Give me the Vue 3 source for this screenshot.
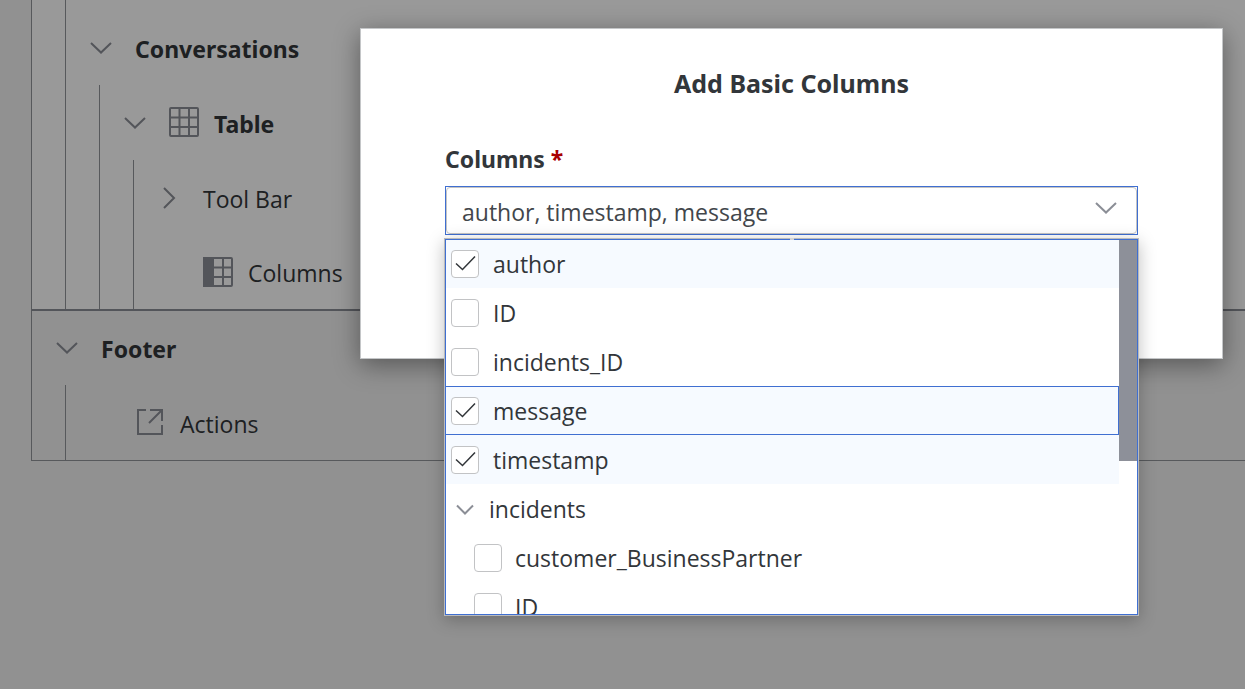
<script setup>
import { ref, computed } from 'vue'

const options = ref([
  { id: 'author', label: 'author', checked: true },
  { id: 'own-id', label: 'ID', checked: false },
  { id: 'incidents-id', label: 'incidents_ID', checked: false },
  { id: 'message', label: 'message', checked: true, focused: true },
  { id: 'timestamp', label: 'timestamp', checked: true },
])
const nested = ref([
  { id: 'customer', label: 'customer_BusinessPartner', checked: false },
  { id: 'nested-id', label: 'ID', checked: false },
])
const order = ['author', 'timestamp', 'message']
const selection = computed(() =>
  [...options.value, ...nested.value]
    .filter((o) => o.checked)
    .sort((a, b) => order.indexOf(a.id) - order.indexOf(b.id))
    .map((o) => o.label)
    .join(', ')
)
</script>

<template>
  <div class="page">
    <main class="outline">
      <section class="panel body-panel">
        <ul class="branch">
          <li>
            <div class="node strong">
              <button class="toggle" type="button" aria-label="Collapse Conversations">
                <svg viewBox="0 0 22 22"><path d="M1 6L11 15.500L21 6" /></svg>
              </button>
              <span>Conversations</span>
            </div>
            <ul class="branch">
              <li>
                <div class="node strong">
                  <button class="toggle" type="button" aria-label="Collapse Table">
                    <svg viewBox="0 0 22 22"><path d="M1 6L11 15.500L21 6" /></svg>
                  </button>
                  <svg class="icon" viewBox="0 0 30 30">
                    <rect x="1" y="1" width="28" height="28" rx="1" />
                    <path d="M10.500 1V29M20 1V29M1 10.500H29M1 20H29" />
                  </svg>
                  <span>Table</span>
                </div>
                <ul class="branch">
                  <li class="node">
                    <button class="toggle" type="button" aria-label="Expand Tool Bar">
                      <svg viewBox="0 0 22 22"><path d="M6 1L16 11L6 21" /></svg>
                    </button>
                    <span>Tool Bar</span>
                  </li>
                  <li class="node last">
                    <span class="toggle"></span>
                    <svg class="icon" viewBox="0 0 30 30">
                      <rect x="1" y="1" width="28" height="28" rx="1" />
                      <path class="solid" d="M1 1H10V29H1Z" />
                      <path d="M20 1V29M11 10.500H29M11 20H29" />
                    </svg>
                    <span>Columns</span>
                  </li>
                </ul>
              </li>
            </ul>
          </li>
        </ul>
      </section>
      <section class="panel footer-panel">
        <div class="node strong last">
          <button class="toggle" type="button" aria-label="Collapse Footer">
            <svg viewBox="0 0 22 22"><path d="M1 6L11 15.500L21 6" /></svg>
          </button>
          <span>Footer</span>
        </div>
        <ul class="branch">
          <li class="node">
            <span class="toggle"></span>
            <svg class="icon" viewBox="0 0 30 30">
              <path d="M11 3H3V27H27V18M15 3H27V14M27 3L14 16" />
            </svg>
            <span>Actions</span>
          </li>
        </ul>
      </section>
    </main>

    <div class="overlay">
      <div class="dialog" role="dialog" aria-labelledby="dialog-title">
        <h1 id="dialog-title">Add Basic Columns</h1>
        <label class="field-label" for="columns">Columns <span class="required">*</span></label>
        <div class="combo">
          <div class="control">
            <input id="columns" type="text" readonly :value="selection" />
            <button class="toggle arrow" type="button" aria-label="Close column list">
              <svg viewBox="0 0 22 22"><path d="M1 5L11 14.500L21 5" /></svg>
            </button>
          </div>
          <div class="dropdown">
            <div class="list">
              <div class="rows">
                <label
                  v-for="o in options"
                  :key="o.id"
                  class="option"
                  :class="{ selected: o.checked, focused: o.focused }"
                >
                  <span class="tick">
                    <input v-model="o.checked" type="checkbox" />
                    <svg v-if="o.checked" viewBox="0 0 28 28"><path d="M5 13.500L11.500 19.500L24 6.500" /></svg>
                  </span>
                  <span>{{ o.label }}</span>
                </label>
                <button class="option group" type="button" aria-expanded="true">
                  <svg viewBox="0 0 18 18"><path d="M1 5.500L9 13.500L17 5.500" /></svg>
                  <span>incidents</span>
                </button>
                <label v-for="o in nested" :key="o.id" class="option child">
                  <span class="tick">
                    <input v-model="o.checked" type="checkbox" />
                    <svg v-if="o.checked" viewBox="0 0 28 28"><path d="M5 13.500L11.500 19.500L24 6.500" /></svg>
                  </span>
                  <span>{{ o.label }}</span>
                </label>
              </div>
              <div class="scrollbar"><div class="thumb"></div></div>
            </div>
          </div>
        </div>
      </div>
    </div>
  </div>
</template>

<style>
body {
  margin: 0;
  background: #f2f2f2;
}
</style>

<style scoped>
.page {
  position: relative;
  min-height: 100vh;
  box-sizing: border-box;
  overflow: hidden;
  font-family: "Open Sans", "Noto Sans", sans-serif;
  font-size: 23px;
  line-height: 32px;
  color: #32363a;
}
.outline {
  padding-left: 31px;
}
.panel {
  border-left: 1px solid #919499;
}
.body-panel {
  background: #fff;
  border-bottom: 2px solid #8b8e96;
}
.body-panel > .branch {
  padding-top: 10px;
}
.footer-panel {
  border-bottom: 1px solid #919499;
}
ul {
  list-style: none;
  margin: 0;
  padding: 0;
}
.branch {
  margin-left: 33px;
  border-left: 1px solid #919499;
}
.node {
  display: flex;
  align-items: center;
  height: 75px;
  padding: 2px 0 0 24px;
  box-sizing: border-box;
}
.node.last {
  height: 74px;
}
.strong,
.field-label,
h1 {
  font-family: "Noto Sans", "Open Sans", sans-serif;
  font-weight: 700;
}
button {
  margin: 0;
  padding: 0;
  border: 0;
  background: none;
  font: inherit;
  color: inherit;
  cursor: pointer;
}
.toggle {
  flex: none;
  width: 22px;
  height: 22px;
  margin: 0 23px 2px 0;
}
svg {
  display: block;
  fill: none;
  stroke: #8b8e96;
  stroke-width: 2;
}
.toggle svg {
  width: 22px;
  height: 22px;
}
.icon {
  flex: none;
  width: 30px;
  height: 30px;
  margin: 0 15px 3px 0;
}
.icon .solid {
  fill: #8b8e96;
}
.overlay {
  position: absolute;
  inset: 0;
  padding: 28px 22px 0 360px;
  background: rgba(0, 0, 0, 0.4);
}
.dialog {
  padding: 38px 84px 123px;
  background: #fff;
  border: 1px solid #c4c6c8;
  box-shadow: 0 6px 24px rgba(0, 0, 0, 0.4);
}
h1 {
  margin: 0 0 44px;
  font-size: 25px;
  line-height: 32px;
  text-align: center;
}
.field-label {
  display: block;
  margin-bottom: 11px;
}
.required {
  color: #a80000;
}
.combo {
  position: relative;
}
.control {
  display: flex;
  align-items: center;
  position: relative;
  border: 1px solid #3f6fd1;
}
.control input {
  flex: 1;
  min-width: 0;
  height: 47px;
  box-sizing: border-box;
  padding: 2px 60px 0 15px;
  border: 1px solid #c4c4c4;
  border-radius: 4px;
  outline: none;
  background: #fff;
  font: inherit;
  color: #42464b;
}
.arrow {
  position: absolute;
  right: 20px;
  margin: 0 0 4px;
}
.dropdown {
  position: absolute;
  top: 52px;
  left: -1px;
  right: -1px;
  border: 1px solid #b9babc;
  box-shadow: 0 4px 16px rgba(0, 0, 0, 0.25);
}
.dropdown::before {
  content: "";
  position: absolute;
  z-index: 1;
  top: -1px;
  left: 50%;
  width: 4px;
  height: 2px;
  margin-left: -2px;
  background: #d4d4d4;
}
.list {
  display: flex;
  height: 376px;
  overflow: hidden;
  background: #fff;
  outline: 1px solid #3f6fd1;
  outline-offset: -1px;
}
.rows {
  flex: 1;
  min-width: 0;
}
.option {
  display: flex;
  align-items: center;
  gap: 14px;
  width: 100%;
  height: 49px;
  box-sizing: border-box;
  padding: 0 6px;
  text-align: left;
}
.selected {
  background: #f6faff;
}
.focused {
  outline: 1px solid #3f6fd1;
  outline-offset: -1px;
}
.group {
  gap: 15px;
  padding-left: 11px;
}
.group svg {
  width: 18px;
  height: 18px;
}
.child {
  padding-left: 29px;
  gap: 13px;
}
.tick {
  display: grid;
  flex: none;
}
.tick input,
.tick svg {
  grid-area: 1 / 1;
  width: 28px;
  height: 28px;
}
.tick input {
  appearance: none;
  margin: 0;
  box-sizing: border-box;
  border: 1px solid #c2c3c5;
  border-radius: 4px;
  background: #fff;
}
.tick svg {
  stroke: #32363a;
  stroke-width: 1.500;
  pointer-events: none;
}
.scrollbar {
  flex: none;
  width: 19px;
}
.thumb {
  height: 59%;
  background: #8d9099;
}
</style>
